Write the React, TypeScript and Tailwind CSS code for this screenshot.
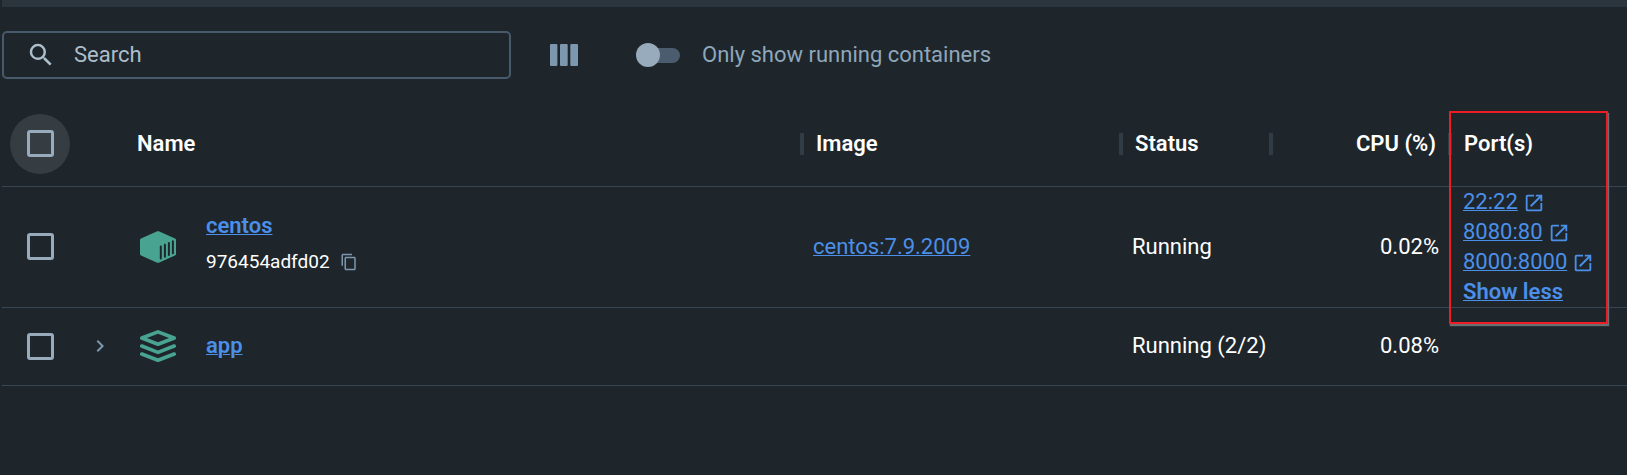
import { ReactNode } from "react";
import { MdChevronRight, MdContentCopy, MdOpenInNew, MdSearch } from "react-icons/md";

const linkClass = "text-[#4b8fe8] underline decoration-1 underline-offset-1";

function ColumnsIcon() {
  return (
    <svg viewBox="0 0 28 22" className="h-[22px] w-7 fill-[#7d97ae]" aria-hidden="true">
      <rect x="0" y="0" width="7.4" height="22" rx="1" />
      <rect x="10" y="0" width="7.7" height="22" rx="1" />
      <rect x="20.3" y="0" width="7.7" height="22" rx="1" />
    </svg>
  );
}

function ContainerIcon() {
  return (
    <svg viewBox="0 0 36 32" className="h-8 w-9" aria-hidden="true">
      <path
        d="M17.2.3a2 2 0 0 1 1.6 0L35 7.6a1.6 1.6 0 0 1 1 1.5v13.8a1.6 1.6 0 0 1-1 1.5l-16.2 7.3a2 2 0 0 1-1.6 0L1 24.4a1.6 1.6 0 0 1-1-1.5V9.1a1.6 1.6 0 0 1 1-1.5z"
        fill="#49a391"
      />
      <path
        d="M20.8 15.6v12M24.9 13.8v12M28.9 12v12M32.9 10.2v12"
        stroke="#1e262c"
        strokeWidth="2"
        strokeLinecap="round"
      />
    </svg>
  );
}

function StackIcon() {
  return (
    <svg viewBox="0 0 36 32" className="h-8 w-9" aria-hidden="true">
      <g fill="none" stroke="#49a391" strokeWidth="3.6" strokeLinejoin="round" strokeLinecap="round">
        <path d="M18 1.9 34.2 8 18 14.3 1.8 8z" />
        <path d="M1.8 16 18 22.4 34.2 16" />
        <path d="M1.8 24 18 30.2 34.2 24" />
      </g>
    </svg>
  );
}

function Checkbox({ label }: { label: string }) {
  return (
    <input
      type="checkbox"
      aria-label={label}
      className="block size-[27px] appearance-none rounded-[3px] border-3 border-[#97abbd] checked:bg-[#97abbd]"
    />
  );
}

function HeaderCell({ children, end = false }: { children: ReactNode; end?: boolean }) {
  return (
    <th scope="col" className="p-0 font-semibold">
      <div className="flex items-center">
        <span className="h-[22px] w-1 bg-[#303d47]" />
        <span className={end ? "flex-1 pr-3 text-right" : "pl-3"}>{children}</span>
      </div>
    </th>
  );
}

const ports = ["22:22", "8080:80", "8000:8000"];

export default function App() {
  return (
    <div className="min-h-screen bg-[#1e262c] pl-0.5 font-[Roboto,sans-serif] text-[22px] leading-[30px] text-white">
      <div className="h-[7px] bg-[#2a353e]" />

      <div className="flex items-center pt-6">
        <label className="flex h-12 w-[509px] items-center rounded-[5px] border-2 border-[#465a6c] pl-[22px]">
          <MdSearch className="size-[30px] text-[#adbecb]" aria-hidden="true" />
          <input
            type="text"
            aria-label="Search"
            placeholder="Search"
            className="ml-[18px] min-w-0 flex-1 bg-transparent outline-none placeholder:text-[#adbecb] placeholder:opacity-100"
          />
        </label>
        <button type="button" aria-label="Choose columns" className="ml-[39px]">
          <ColumnsIcon />
        </button>
        <label className="ml-[58px] flex items-center text-[#8fa7ba]">
          <input type="checkbox" role="switch" className="peer sr-only" />
          <span className="flex h-6 w-11 items-center">
            <span className="z-10 size-6 rounded-full bg-[#97abbd]" />
            <span className="-ml-3 h-[15px] flex-1 rounded-r-full bg-[#4a5c6d]" />
          </span>
          <span className="ml-[22px]">Only show running containers</span>
        </label>
      </div>

      <div className="relative mt-[23px]">
        <table className="w-full table-fixed border-collapse text-left">
          <colgroup>
            <col className="w-[75px]" />
            <col className="w-[60px]" />
            <col className="w-[57px]" />
            <col />
            <col className="w-[319px]" />
            <col className="w-[150px]" />
            <col className="w-[179px]" />
            <col className="w-[179px]" />
          </colgroup>
          <thead>
            <tr className="h-[84px] border-b border-[#384651]">
              <th scope="col" className="p-0 pl-2">
                <span className="flex size-[60px] items-center justify-center rounded-full bg-[#353c42]">
                  <Checkbox label="Select all" />
                </span>
              </th>
              <th scope="col" colSpan={3} className="p-0 pl-[60px] font-semibold">
                Name
              </th>
              <HeaderCell>Image</HeaderCell>
              <HeaderCell>Status</HeaderCell>
              <HeaderCell end>CPU (%)</HeaderCell>
              <HeaderCell>Port(s)</HeaderCell>
            </tr>
          </thead>
          <tbody>
            <tr className="h-[121px] border-b border-[#384651]">
              <td className="p-0 pl-[25px]">
                <Checkbox label="Select centos" />
              </td>
              <td className="p-0" />
              <td className="p-0 pl-[3px]">
                <ContainerIcon />
              </td>
              <td className="p-0 pb-1.5 pl-3">
                <a href="#centos" className={`${linkClass} font-semibold`}>
                  centos
                </a>
                <div className="mt-1.5 flex items-center text-[19px]">
                  976454adfd02
                  <button type="button" aria-label="Copy container ID" className="ml-2.5 text-[#7d97ae]">
                    <MdContentCopy className="size-[18px]" />
                  </button>
                </div>
              </td>
              <td className="p-0 pl-[13px]">
                <a href="#image" className={linkClass}>
                  centos:7.9.2009
                </a>
              </td>
              <td className="p-0 pl-[13px]">Running</td>
              <td className="p-0 pr-[9px] text-right">0.02%</td>
              <td className="p-0 pl-[15px]">
                {ports.map((port) => (
                  <div key={port} className="flex items-center gap-[5px]">
                    <a href={`#${port}`} className={linkClass}>
                      {port}
                    </a>
                    <MdOpenInNew className="mt-0.5 size-[22px] text-[#4b8fe8]" aria-hidden="true" />
                  </div>
                ))}
                <button type="button" className={`${linkClass} block font-semibold`}>
                  Show less
                </button>
              </td>
            </tr>
            <tr className="h-[78px] border-b border-[#384651]">
              <td className="p-0 pl-[25px]">
                <Checkbox label="Select app" />
              </td>
              <td className="p-0 pl-[11px]">
                <button type="button" aria-label="Expand app" className="block text-[#7d97ae]">
                  <MdChevronRight className="size-6" />
                </button>
              </td>
              <td className="p-0 pl-[3px]">
                <StackIcon />
              </td>
              <td className="p-0 pl-3">
                <a href="#app" className={`${linkClass} font-semibold`}>
                  app
                </a>
              </td>
              <td className="p-0" />
              <td className="p-0 pl-[13px]">Running (2/2)</td>
              <td className="p-0 pr-[9px] text-right">0.08%</td>
              <td className="p-0" />
            </tr>
          </tbody>
        </table>
        <div className="pointer-events-none absolute top-[9px] right-[19px] h-[213px] w-[159px] border-2 border-[#ee1c24] shadow-[1px_2px_1px_#6b6f72]" />
      </div>
    </div>
  );
}
